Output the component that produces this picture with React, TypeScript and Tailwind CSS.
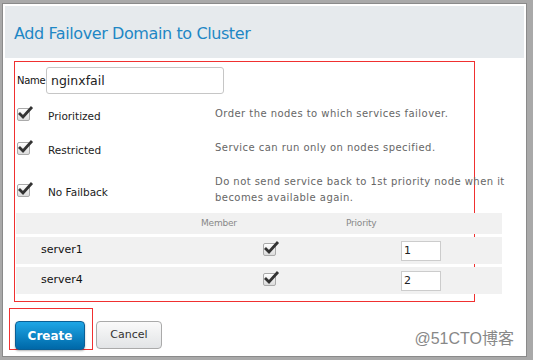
const desc = "text-[10px] text-[#666] tracking-[0.45px] font-['DejaVu_Sans',sans-serif]";

function Check() {
  return (
    <span className="relative inline-block w-[13px] h-[13px] border border-[#aaa] rounded-[2px] bg-gradient-to-b from-white to-[#dcdcdc]">
      <svg className="absolute -left-[1px] -top-[4px]" width="17" height="15" viewBox="0 0 17 15">
        <path d="M2 8 L6 12 L15 2" fill="none" stroke="#333" strokeWidth="2.8" strokeLinejoin="miter" />
      </svg>
    </span>
  );
}

function OptionRow({ label, text, h }: { label: string; text: string; h: string }) {
  return (
    <div className={`flex items-center ${h}`}>
      <div className="w-[32px] shrink-0 pl-[1px] pt-[4px]"><Check /></div>
      <div className="w-[167px] shrink-0 text-[10.5px] text-[#222] pt-[6px] font-['DejaVu_Sans',sans-serif]">{label}</div>
      <div className={`${desc} leading-[16px] w-[292px] shrink-0`}>{text}</div>
    </div>
  );
}

function ServerRow({ name, prio }: { name: string; prio: string }) {
  return (
    <div className="flex items-center h-[27px] bg-[#f1f1f1] mt-[3px]">
      <div className="w-[247px] pl-[25px] text-[11px] text-[#111] font-['DejaVu_Sans',sans-serif]">{name}</div>
      <div className="w-[138px] pt-[1px]"><Check /></div>
      <div className="w-[40px] h-[20px] border border-[#ccc] bg-white text-[11px] pl-[2px] leading-[18px] text-[#222] font-['DejaVu_Sans',sans-serif]">{prio}</div>
    </div>
  );
}

export default function App() {
  return (
    <div className="w-[533px] h-[360px] bg-[#a9a9a9] pt-[3px] pl-[2px] font-['Liberation_Sans',sans-serif]">
      <div className="w-[525px] h-[354px] bg-white border border-[#8a8a8a] relative">
        <div className="mx-[2px] mt-[2px] h-[52px] bg-[#e6eaed] pl-[9px] pt-[16px] text-[16px] text-[#1e87c5] font-['DejaVu_Sans',sans-serif] tracking-[-0.4px]">
          Add Failover Domain to Cluster
        </div>
        <div className="ml-[11px] mt-[3px] w-[461px] h-[241px] border border-[#f03030] px-[1px]">
          <div className="flex items-center mt-[5px]">
            <span className="text-[10px] text-[#111] font-['DejaVu_Sans',sans-serif] w-[30px] shrink-0 pl-[1px] tracking-[-0.3px]">Name</span>
            <div className="w-[178px] h-[27px] border border-[#c6c6c6] rounded-[3px] text-[12.5px] pl-[4px] leading-[25px] text-[#222] font-['DejaVu_Sans',sans-serif]">nginxfail</div>
          </div>
          <OptionRow h="h-[36px] mt-[2px]" label="Prioritized" text="Order the nodes to which services failover." />
          <OptionRow h="h-[32px]" label="Restricted" text="Service can run only on nodes specified." />
          <OptionRow h="h-[44px] mt-[4px]" label="No Failback" text="Do not send service back to 1st priority node when it becomes available again." />
          <div className="w-[486px] mt-[1px]">
            <div className="flex items-center h-[21px] bg-[#f1f1f1] text-[9px] text-[#888] font-['DejaVu_Sans',sans-serif] tracking-[-0.2px]">
              <div className="w-[185px]" />
              <div className="w-[145px]">Member</div>
              <div>Priority</div>
            </div>
            <ServerRow name="server1" prio="1" />
            <ServerRow name="server4" prio="2" />
          </div>
        </div>
        <div className="flex items-end ml-[6px] mt-[6px]">
          <div className="w-[84px] h-[42px] border border-[#f03030] pl-[5px] pt-[12px]">
            <button className="w-[70px] h-[29px] rounded-[4px] border border-[#0a5f95] bg-gradient-to-b from-[#1ea6e6] to-[#0068a8] text-white text-[12px] font-bold font-['DejaVu_Sans',sans-serif] shadow-[0_1px_2px_rgba(0,0,0,0.3)]">Create</button>
          </div>
          <button className="ml-[3px] mb-[1px] w-[66px] h-[28px] rounded-[4px] border border-[#aaa] bg-gradient-to-b from-[#fafafa] to-[#e2e4e6] text-[#333] text-[11px] font-['DejaVu_Sans',sans-serif]">Cancel</button>
        </div>
        <div className="absolute right-[12px] bottom-[5px] text-[16px] text-[#888] font-['Liberation_Sans','Noto_Sans_CJK_SC',sans-serif]">@51CTO博客</div>
      </div>
    </div>
  );
}
